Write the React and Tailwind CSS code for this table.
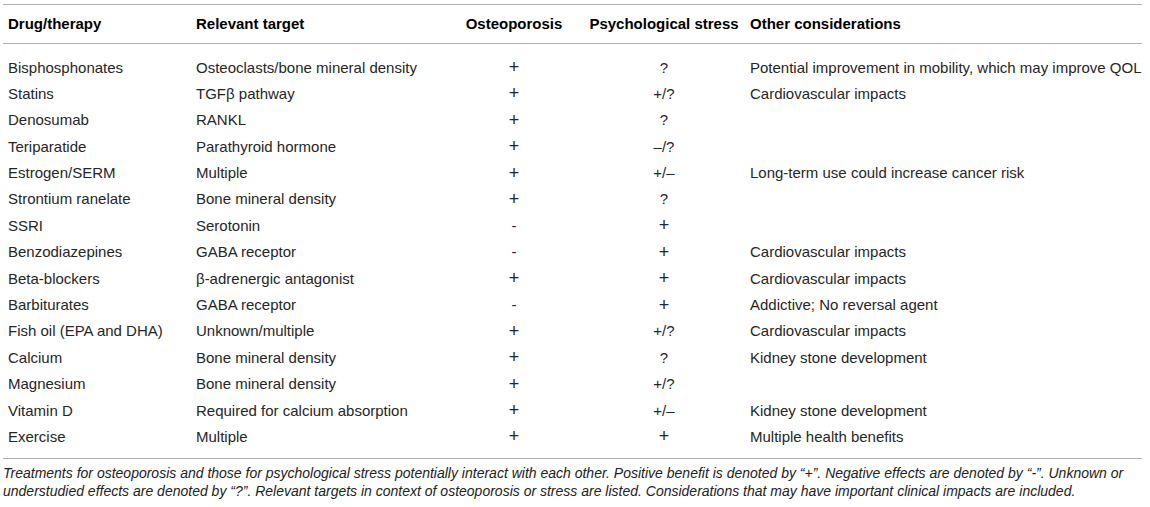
const rows = [
  ['Bisphosphonates', 'Osteoclasts/bone mineral density', '+', '?', 'Potential improvement in mobility, which may improve QOL'],
  ['Statins', 'TGFβ pathway', '+', '+/?', 'Cardiovascular impacts'],
  ['Denosumab', 'RANKL', '+', '?', ''],
  ['Teriparatide', 'Parathyroid hormone', '+', '–/?', ''],
  ['Estrogen/SERM', 'Multiple', '+', '+/–', 'Long-term use could increase cancer risk'],
  ['Strontium ranelate', 'Bone mineral density', '+', '?', ''],
  ['SSRI', 'Serotonin', '-', '+', ''],
  ['Benzodiazepines', 'GABA receptor', '-', '+', 'Cardiovascular impacts'],
  ['Beta-blockers', 'β-adrenergic antagonist', '+', '+', 'Cardiovascular impacts'],
  ['Barbiturates', 'GABA receptor', '-', '+', 'Addictive; No reversal agent'],
  ['Fish oil (EPA and DHA)', 'Unknown/multiple', '+', '+/?', 'Cardiovascular impacts'],
  ['Calcium', 'Bone mineral density', '+', '?', 'Kidney stone development'],
  ['Magnesium', 'Bone mineral density', '+', '+/?', ''],
  ['Vitamin D', 'Required for calcium absorption', '+', '+/–', 'Kidney stone development'],
  ['Exercise', 'Multiple', '+', '+', 'Multiple health benefits'],
]

const cols = 'grid grid-cols-[188px_268px_123px_164px_1fr] items-center'

function Sym({ v }) {
  // the plus signs in the source are set larger and thinner than the text
  const big = v === '+'
  return <span className={big ? 'text-[18px]' : ''}>{v}</span>
}

export default function App() {
  return (
    <div className="min-h-screen bg-white px-[3px] pt-[4px] text-[15px] text-[#262626] [font-family:'Liberation_Sans',Arial,sans-serif] antialiased">
      <div className="w-[1139px] border-t-[1.5px] border-[#b0b0b0]">
        <div className={`${cols} h-[39px] border-b-[1.5px] border-[#b0b0b0] font-bold text-black`}>
          <div className="pl-[5px]">Drug/therapy</div>
          <div className="pl-[5px]">Relevant target</div>
          <div className="pr-[13px] text-center">Osteoporosis</div>
          <div className="text-center">Psychological stress</div>
          <div className="pl-[4px]">Other considerations</div>
        </div>

        <div className="border-b-[1.5px] border-[#b0b0b0] pt-[10px] pb-[8px]">
          {rows.map(([drug, target, ost, psy, other]) => (
            <div key={drug} className={`${cols} h-[26.4px] leading-[26px]`}>
              <div className="pl-[5px]">{drug}</div>
              <div className="pl-[5px]">{target}</div>
              <div className="pr-[13px] text-center"><Sym v={ost} /></div>
              <div className="text-center"><Sym v={psy} /></div>
              <div className="whitespace-nowrap pl-[4px]">{other}</div>
            </div>
          ))}
        </div>
      </div>

      <p className="w-[1142px] pt-[5px] text-[14px] leading-[18px] italic text-[#222]">
        Treatments for osteoporosis and those for psychological stress potentially interact with each other. Positive benefit is denoted by “+”. Negative effects are denoted by “-”. Unknown or
        <br />
        understudied effects are denoted by “?”. Relevant targets in context of osteoporosis or stress are listed. Considerations that may have important clinical impacts are included.
      </p>
    </div>
  )
}
